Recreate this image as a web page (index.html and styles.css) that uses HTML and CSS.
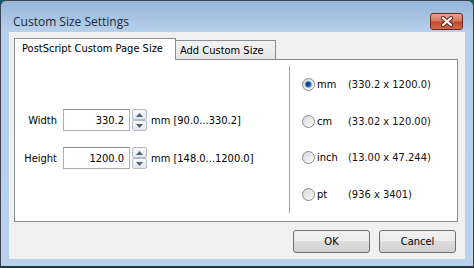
FILE: index.html
```html
<!DOCTYPE html>
<html lang="en">
<head>
    <meta charset="UTF-8">
    <meta name="viewport" content="width=device-width, initial-scale=1.0">
    <title>Custom Size Settings</title>
    <link rel="stylesheet" href="styles.css">
</head>
<body>
    <div class="window">
        <div class="titlebar">
            <span class="title">Custom Size Settings</span>
            <button class="close-btn">
                <svg width="14" height="11" viewBox="0 0 14 11">
                    <path d="M3 2 L11 9 M11 2 L3 9" stroke="#5a2418" stroke-width="4" stroke-linecap="round"/>
                    <path d="M3 2 L11 9 M11 2 L3 9" stroke="#fff" stroke-width="2.2" stroke-linecap="round"/>
                </svg>
            </button>
        </div>
        <div class="client">
            <div class="tabs">
                <div class="tab active">PostScript Custom Page Size</div>
                <div class="tab">Add Custom Size</div>
            </div>
            <div class="panel">
                <div class="size-fields">
                    <div class="field-row">
                        <span class="field-label">Width</span>
                        <input class="num-input" type="text" value="330.2">
                        <div class="spinner">
                            <span class="spin-btn"><svg width="7" height="4"><path d="M0 4 L3.5 0 L7 4 Z" fill="#4d6185"/></svg></span>
                            <span class="spin-btn"><svg width="7" height="4"><path d="M0 0 L3.5 4 L7 0 Z" fill="#4d6185"/></svg></span>
                        </div>
                        <span class="range">mm [90.0...330.2]</span>
                    </div>
                    <div class="field-row">
                        <span class="field-label">Height</span>
                        <input class="num-input" type="text" value="1200.0">
                        <div class="spinner">
                            <span class="spin-btn"><svg width="7" height="4"><path d="M0 4 L3.5 0 L7 4 Z" fill="#4d6185"/></svg></span>
                            <span class="spin-btn"><svg width="7" height="4"><path d="M0 0 L3.5 4 L7 0 Z" fill="#4d6185"/></svg></span>
                        </div>
                        <span class="range">mm [148.0...1200.0]</span>
                    </div>
                </div>
                <div class="units">
                    <div class="unit-row">
                        <svg class="radio" width="13" height="13" viewBox="0 0 13 13">
                            <defs>
                                <linearGradient id="rb" x1="0" y1="0" x2="1" y2="1">
                                    <stop offset="0" stop-color="#d4d4d4"/>
                                    <stop offset="1" stop-color="#ffffff"/>
                                </linearGradient>
                                <radialGradient id="dot" cx="0.4" cy="0.4" r="0.7">
                                    <stop offset="0" stop-color="#0b2f5c"/>
                                    <stop offset="0.5" stop-color="#1d5fae"/>
                                    <stop offset="1" stop-color="#7fb4ea"/>
                                </radialGradient>
                            </defs>
                            <circle cx="6.5" cy="6.5" r="6" fill="url(#rb)" stroke="#8a8a8a"/>
                            <circle cx="6.5" cy="6.5" r="3.3" fill="url(#dot)"/>
                        </svg>
                        <span class="unit">mm</span>
                        <span class="dims">(330.2 x 1200.0)</span>
                    </div>
                    <div class="unit-row">
                        <svg class="radio" width="13" height="13" viewBox="0 0 13 13">
                            <circle cx="6.5" cy="6.5" r="6" fill="url(#rb)" stroke="#8a8a8a"/>
                        </svg>
                        <span class="unit">cm</span>
                        <span class="dims">(33.02 x 120.00)</span>
                    </div>
                    <div class="unit-row">
                        <svg class="radio" width="13" height="13" viewBox="0 0 13 13">
                            <circle cx="6.5" cy="6.5" r="6" fill="url(#rb)" stroke="#8a8a8a"/>
                        </svg>
                        <span class="unit">inch</span>
                        <span class="dims">(13.00 x 47.244)</span>
                    </div>
                    <div class="unit-row">
                        <svg class="radio" width="13" height="13" viewBox="0 0 13 13">
                            <circle cx="6.5" cy="6.5" r="6" fill="url(#rb)" stroke="#8a8a8a"/>
                        </svg>
                        <span class="unit">pt</span>
                        <span class="dims">(936 x 3401)</span>
                    </div>
                </div>
            </div>
            <div class="actions">
                <button class="dlg-btn">OK</button>
                <button class="dlg-btn">Cancel</button>
            </div>
        </div>
    </div>
</body>
</html>
```

FILE: styles.css
```css
body, html {
    margin: 0;
    padding: 0;
    background-color: #0f5f6e;
}
.window {
    width: 474px;
    height: 268px;
    box-sizing: border-box;
    border: 1px solid #3c4450;
    border-bottom: 2px solid #1c3a44;
    border-radius: 6px 6px 0 0;
    background: linear-gradient(#97b6da, #b6cfea 30px, #bad2ec);
    padding: 0 8px 7px;
    display: flex;
    flex-direction: column;
    font-family: "DejaVu Sans Condensed", "DejaVu Sans", sans-serif;
    font-size: 11px;
    color: #000;
}
.titlebar {
    height: 31px;
    box-sizing: border-box;
    padding-top: 9px;
    display: flex;
    align-items: center;
    justify-content: space-between;
}
.title {
    font-family: "Open Sans", sans-serif;
    font-size: 12px;
    color: #1e2a36;
    padding-left: 4px;
}
.close-btn {
    width: 33px;
    height: 17px;
    margin-right: 2px;
    padding: 0;
    border: 1px solid #6e2a1c;
    border-radius: 3px;
    background: linear-gradient(#e9a593, #d7745d 45%, #c24a30 55%, #d2684c);
    display: flex;
    align-items: center;
    justify-content: center;
}
.client {
    flex: 1;
    background-color: #f0f0f0;
    padding: 6px 7px 0 5px;
}
.tabs {
    display: flex;
    align-items: flex-end;
    height: 22px;
    margin-bottom: -1px;
}
.tab {
    box-sizing: border-box;
    height: 20px;
    width: 100px;
    border: 1px solid #898c95;
    border-left: none;
    background: linear-gradient(#f3f3f3, #e6e6e6);
    display: flex;
    align-items: center;
    padding-left: 4px;
    padding-top: 1px;
}
.tab.active {
    position: relative;
    z-index: 1;
    height: 22px;
    width: 162px;
    border-left: 1px solid #898c95;
    border-bottom: none;
    background: #fff;
    padding-left: 7px;
    padding-top: 0;
    padding-bottom: 2px;
}
.panel {
    height: 163px;
    box-sizing: border-box;
    border: 1px solid #898c95;
    background-color: #fff;
    display: flex;
}
.size-fields {
    width: 274px;
    display: flex;
    flex-direction: column;
    justify-content: center;
    gap: 16px;
    padding-bottom: 3px;
}
.field-row {
    display: flex;
    align-items: center;
    height: 22px;
}
.field-label {
    width: 42px;
    text-align: right;
    margin-right: 6px;
}
.num-input {
    width: 67px;
    height: 22px;
    box-sizing: border-box;
    border: 1px solid #abadb3;
    border-top-color: #8e9198;
    font-family: inherit;
    font-size: 11px;
    text-align: right;
    padding: 0 5px 0 0;
    margin: 0 2px 0 0;
}
.spinner {
    width: 15px;
    height: 22px;
    display: flex;
    flex-direction: column;
    gap: 0;
    margin-right: 4px;
}
.spin-btn {
    flex: 1;
    box-sizing: border-box;
    border: 1px solid #b5bcc7;
    border-radius: 2px;
    background: linear-gradient(#fafafa, #e4e7eb);
    display: flex;
    align-items: center;
    justify-content: center;
}
.units {
    flex: 1;
    border-left: 1px solid #a0a0a0;
    margin: 6px 0 8px;
    display: flex;
    flex-direction: column;
}
.unit-row {
    flex: 1;
    display: flex;
    align-items: center;
    padding-left: 12px;
}
.radio {
    margin-right: 2px;
}
.unit {
    width: 31px;
}
.dims {
    color: #111;
}
.actions {
    display: flex;
    justify-content: flex-end;
    gap: 9px;
    margin-top: 8px;
    padding-right: 2px;
}
.dlg-btn {
    width: 77px;
    height: 23px;
    border: 1px solid #707070;
    border-radius: 3px;
    background: linear-gradient(#f2f2f2, #ebebeb 50%, #dddddd 50%, #cfcfcf);
    font-family: inherit;
    font-size: 11px;
    color: #000;
    padding: 0;
}
```
